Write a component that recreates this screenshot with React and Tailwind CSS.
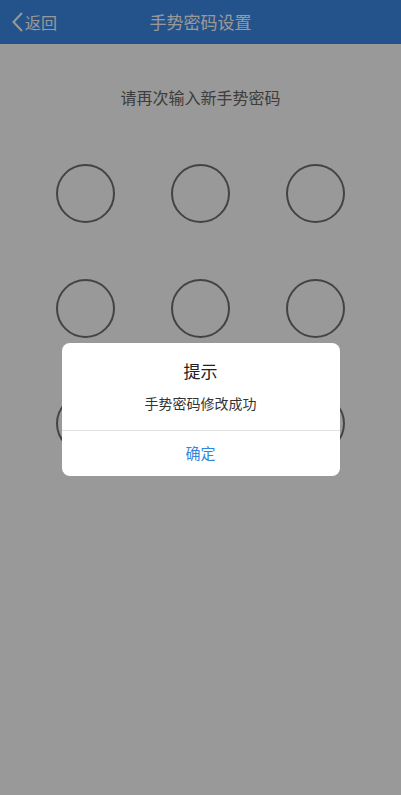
const Dot = () => (
  <div className="w-[59px] h-[59px] rounded-full border-[2.5px] border-[#717171]" />
);

export default function App() {
  const font = { fontFamily: '"Noto Sans CJK SC", "Noto Sans", sans-serif' };
  return (
    <div className="relative w-[401px] h-[795px] bg-white overflow-hidden" style={font}>
      <div className="h-[44px] bg-[#3c89e6] flex items-center relative">
        <div className="flex items-center pl-[12px] text-white text-[16px]">
          <svg width="11" height="20" viewBox="0 0 11 20" className="mr-[2px]">
            <path d="M10 1 L1.5 10 L10 19" fill="none" stroke="white" strokeWidth="2" />
          </svg>
          <span>返回</span>
        </div>
        <div className="absolute inset-0 flex items-center justify-center text-white text-[17px]">
          手势密码设置
        </div>
      </div>

      <div className="pt-[41px] text-center text-[16px] leading-[24px] text-[#666]">
        请再次输入新手势密码
      </div>

      <div className="mt-[55px] flex flex-col gap-[56px] items-center">
        {[0, 1, 2].map((r) => (
          <div key={r} className="flex gap-[56px]">
            <Dot />
            <Dot />
            <Dot />
          </div>
        ))}
      </div>

      <div className="absolute inset-0 bg-black/40 flex justify-center items-start pt-[343px]">
        <div className="w-[278px] bg-white rounded-[8px] overflow-hidden">
          <div className="pt-[16px] pb-[17px] text-center">
            <div className="text-[17px] leading-[24px] text-[#222]">提示</div>
            <div className="mt-[10px] text-[14px] leading-[20px] text-[#333]">手势密码修改成功</div>
          </div>
          <div className="h-[1px] bg-[#e0e0e0]" />
          <div className="h-[45px] flex items-center justify-center text-[15px] text-[#2f86e0]">
            确定
          </div>
        </div>
      </div>
    </div>
  );
}
